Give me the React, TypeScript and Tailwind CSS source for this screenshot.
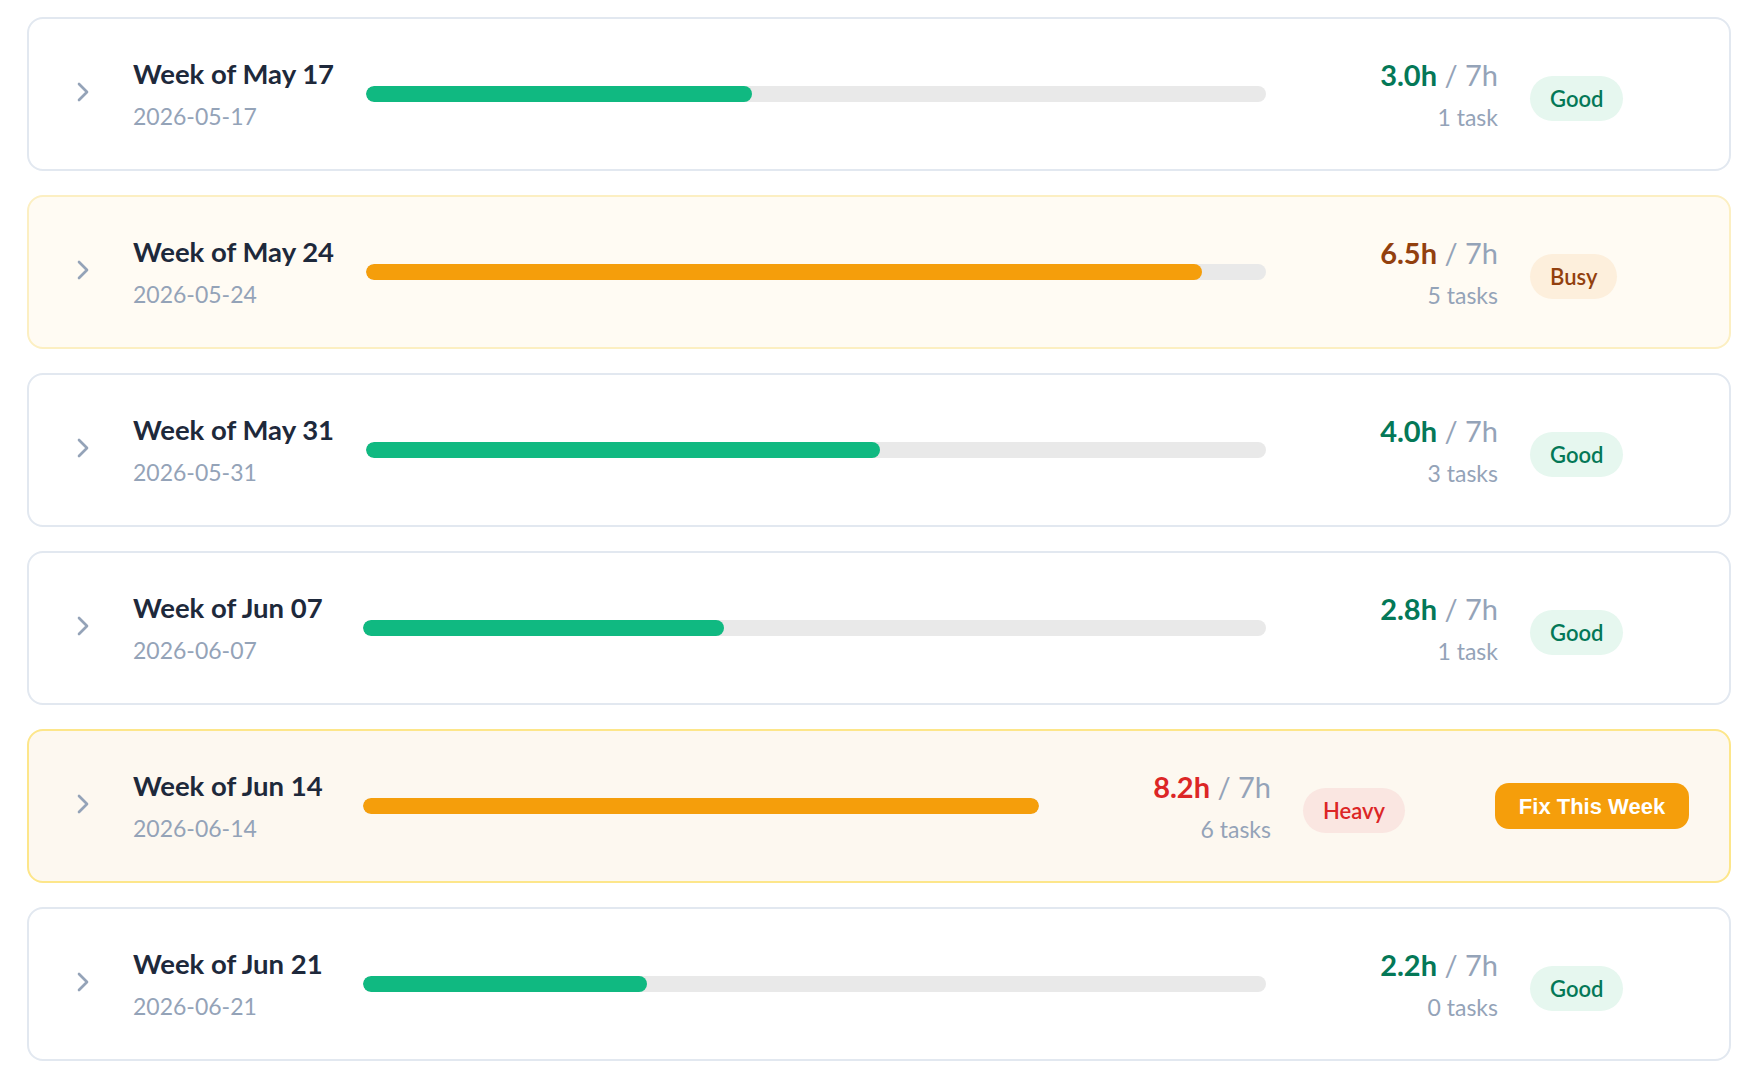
import { ChevronRight } from 'lucide-react';

type Status = 'Good' | 'Busy' | 'Heavy';

type Week = {
  label: string;
  date: string;
  hours: number;
  tasks: number;
  status: Status;
};

const CAPACITY = 7;

const weeks: Week[] = [
  { label: 'Week of May 17', date: '2026-05-17', hours: 3.0, tasks: 1, status: 'Good' },
  { label: 'Week of May 24', date: '2026-05-24', hours: 6.5, tasks: 5, status: 'Busy' },
  { label: 'Week of May 31', date: '2026-05-31', hours: 4.0, tasks: 3, status: 'Good' },
  { label: 'Week of Jun 07', date: '2026-06-07', hours: 2.8, tasks: 1, status: 'Good' },
  { label: 'Week of Jun 14', date: '2026-06-14', hours: 8.2, tasks: 6, status: 'Heavy' },
  { label: 'Week of Jun 21', date: '2026-06-21', hours: 2.2, tasks: 0, status: 'Good' },
];

const cardStyles: Record<Status, string> = {
  Good: 'border-[#e2e8f0] bg-white pr-[38px]',
  Busy: 'border-[#fcefc2] bg-[#fffbf3] pr-[38px]',
  Heavy: 'border-[#fde68a] bg-[#fdf8f0] pr-[40px]',
};

const hoursColor: Record<Status, string> = {
  Good: 'text-[#047857]',
  Busy: 'text-[#92400e]',
  Heavy: 'text-[#dc2626]',
};

const badgeStyles: Record<Status, string> = {
  Good: 'bg-[#e6f7ef] text-[#047857]',
  Busy: 'bg-[#fdefdc] text-[#92400e]',
  Heavy: 'bg-[#fae6e1] text-[#dc2626]',
};

function WeekRow({ week }: { week: Week }) {
  const pct = Math.min(100, (week.hours / CAPACITY) * 100);
  const heavy = week.status === 'Heavy';
  const barColor = week.status === 'Good' ? 'bg-[#10b981]' : 'bg-[#f59e0b]';

  return (
    <div
      className={`flex h-[154px] items-center rounded-2xl border-2 pl-[38px] ${cardStyles[week.status]}`}
    >
      <button type="button" className="-mt-1 flex h-8 w-8 items-center justify-center text-[#94a3b8]">
        <ChevronRight size={32} strokeWidth={2} />
      </button>

      <div className="ml-[34px] min-w-[198px] pt-[2px]">
        <div className="text-[27.5px] font-bold leading-[36px] text-[#1e293b]">{week.label}</div>
        <div className="mt-[6px] text-[23px] leading-[36px] text-[#94a3b8]">{week.date}</div>
      </div>

      <div className="ml-8 h-4 flex-1 overflow-hidden rounded-full bg-[#e9e9e9]">
        <div className={`h-full rounded-full ${barColor}`} style={{ width: `${pct}%` }} />
      </div>

      <div className="ml-[39px] w-[193px] pt-[4px] text-right">
        <div className="text-[29px] leading-[36px]">
          <span className={`font-bold ${hoursColor[week.status]}`}>{week.hours.toFixed(1)}h</span>
          <span className="text-[#94a3b8]"> / {CAPACITY}h</span>
        </div>
        <div className="mt-[6px] text-[23px] leading-[36px] text-[#94a3b8]">
          {week.tasks} {week.tasks === 1 ? 'task' : 'tasks'}
        </div>
      </div>

      <div className="ml-[32px] mt-[8px] w-[161px]">
        <span
          className={`inline-block rounded-full px-[20px] py-[6px] text-[22px] font-semibold leading-[33px] ${badgeStyles[week.status]}`}
        >
          {week.status}
        </span>
      </div>

      {heavy && (
        <button
          type="button"
          className="ml-[31px] h-[46px] w-[194px] rounded-[14px] bg-[#f59e0b] text-[22px] font-bold text-white"
          style={{ fontFamily: '"Liberation Sans", Arial, sans-serif' }}
        >
          Fix This Week
        </button>
      )}
    </div>
  );
}

export default function App() {
  return (
    <div
      className="min-h-screen bg-white pl-[27px] pr-[33px] pt-[17px]"
      style={{ fontFamily: 'Lato, "Open Sans", sans-serif' }}
    >
      <div className="flex flex-col gap-[24px]">
        {weeks.map((w) => (
          <WeekRow key={w.date} week={w} />
        ))}
      </div>
    </div>
  );
}
